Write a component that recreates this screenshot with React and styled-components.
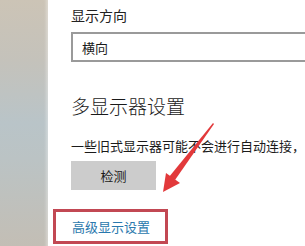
import React from "react";
import styled, { createGlobalStyle } from "styled-components";

const Global = createGlobalStyle`
  html, body { margin: 0; padding: 0; background: #ffffff; }
  body { font-family: "Noto Sans CJK SC", "Noto Sans", sans-serif; overflow: hidden; }
`;

const Page = styled.div`
  position: relative;
  display: flex;
  width: 305px;
  height: 246px;
  overflow: hidden;
  background: #ffffff;
`;

const Sidebar = styled.div`
  flex: 0 0 48px;
  height: 100%;
  background: linear-gradient(180deg, #ccc4b6 0%, #c4c2bb 25%, #b9c4c8 50%, #bbc3c4 65%, #c3beb5 100%);
  box-shadow: inset -4px 0 3px -2px rgba(255, 255, 255, 0.35);
`;

const Main = styled.div`
  flex: 1;
  min-width: 0;
  padding-left: 23px;
  display: flex;
  flex-direction: column;
  align-items: flex-start;
  color: #1b1b1b;
`;

const Label = styled.div`
  margin-top: 5px;
  font-size: 14px;
  line-height: 20px;
  color: #222;
`;

const Select = styled.div`
  margin-top: 7px;
  box-sizing: border-box;
  width: 280px;
  height: 30px;
  border: 2px solid #9a9a9a;
  padding-left: 9px;
  display: flex;
  align-items: center;
  font-size: 13px;
  color: #1b1b1b;
  flex-shrink: 0;
`;

const Heading = styled.div`
  margin-top: 30px;
  font-size: 19px;
  font-weight: 300;
  line-height: 28px;
  color: #1a1a1a;
`;

const Desc = styled.div`
  margin-top: 17px;
  font-size: 13px;
  line-height: 18px;
  white-space: nowrap;
  color: #1b1b1b;
`;

const Button = styled.div`
  margin-top: 6px;
  width: 85px;
  height: 29px;
  background: #cccccc;
  display: flex;
  align-items: center;
  justify-content: center;
  font-size: 13px;
  color: #1b1b1b;
`;

const Annotated = styled.div`
  margin-top: 19px;
  margin-left: -18px;
  box-sizing: border-box;
  width: 115px;
  height: 35px;
  border: 3px solid #c24853;
  padding-left: 16px;
  display: flex;
  align-items: center;
`;

const Link = styled.span`
  font-size: 13px;
  color: #2a78ad;
`;

const Arrow = styled.svg`
  position: absolute;
  left: 0;
  top: 0;
  pointer-events: none;
`;

export default function App() {
  return (
    <>
      <Global />
      <Page>
        <Sidebar />
        <Main>
          <Label>显示方向</Label>
          <Select>横向</Select>
          <Heading>多显示器设置</Heading>
          <Desc>一些旧式显示器可能不会进行自动连接，</Desc>
          <Button>检测</Button>
          <Annotated>
            <Link>高级显示设置</Link>
          </Annotated>
        </Main>
        <Arrow width="305" height="246" viewBox="0 0 305 246">
          <polygon points="213,123 214,124 175,180 169,177" fill="#e2393b" />
          <polygon points="163,192 166,173 180,183" fill="#e2393b" />
        </Arrow>
      </Page>
    </>
  );
}
